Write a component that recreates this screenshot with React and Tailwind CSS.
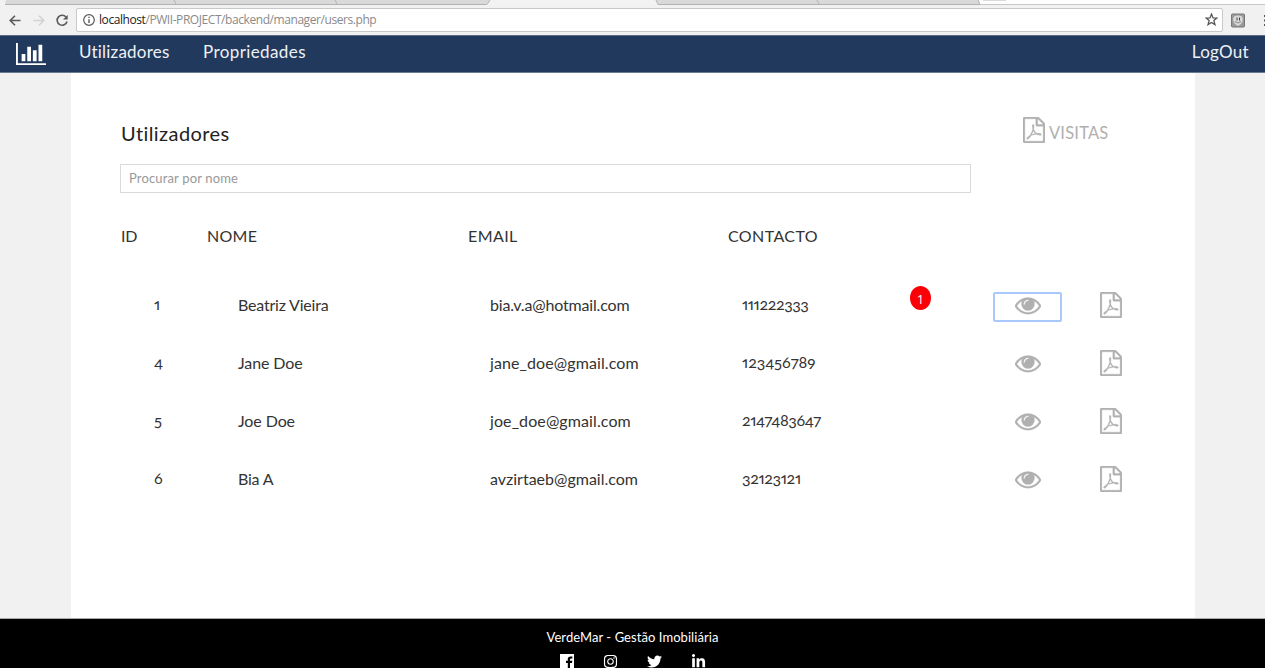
import React from "react";
import { FaTwitter, FaInstagram, FaLinkedinIn } from "react-icons/fa";

const users = [
  { id: 1, name: "Beatriz Vieira", email: "bia.v.a@hotmail.com", phone: "111222333", nameCls: "tracking-[-0.2px]", mailCls: "tracking-[-0.17px]", phoneCls: "tracking-[-0.4px]", active: true },
  { id: 4, name: "Jane Doe", email: "jane_doe@gmail.com", phone: "123456789", nameCls: "tracking-[-0.1px]", mailCls: "tracking-[0.1px]", phoneCls: "tracking-[-0.05px]" },
  { id: 5, name: "Joe Doe", email: "joe_doe@gmail.com", phone: "2147483647", nameCls: "tracking-[-0.1px]", mailCls: "tracking-[0.1px]", phoneCls: "tracking-[-0.42px]" },
  { id: 6, name: "Bia A", email: "avzirtaeb@gmail.com", phone: "32123121", nameCls: "tracking-[-0.2px]", mailCls: "tracking-[0px]", phoneCls: "tracking-[-0.35px]" },
];

function PdfIcon() {
  return (
    <svg viewBox="0 0 1536 1792" className="block h-[26px] w-[22px] shrink-0 fill-[#b0b0b0] stroke-[#b0b0b0]" strokeWidth="24" preserveAspectRatio="none">
      <path d="M1468 380q28 28 48 76t20 88v1152q0 40-28 68t-68 28h-1344q-40 0-68-28t-28-68v-1600q0-40 28-68t68-28h896q40 0 88 20t76 48zM1024 136v376h376q-10-29-22-41l-313-313q-12-12-41-22zM1408 1664v-1024h-416q-40 0-68-28t-28-68v-416h-768v1536h1280zM894 1071q33 26 84 56 59-7 117-7 147 0 177 49 16 22 2 52 0 1-1 2l-2 2v1q-6 38-71 38-48 0-115-20t-130-53q-221 24-392 83-153 262-242 262-15 0-28-7l-24-12q-1-1-6-5-10-10-6-36 9-40 56-91.5t132-96.5q14-9 23 6 2 2 2 4 52-85 107-197 68-136 104-262-24-82-30.5-159.5t6.5-127.5q11-40 42-40h22q23 0 35 15 18 21 9 68-2 6-4 8 1 3 1 8v30q-2 123-14 192 55 164 146 238zM318 1482q52-24 137-158-51 40-87.5 84t-49.5 74zM716 562q-15 42-2 132 1-7 7-44 0-3 7-43 1-4 4-8-1-1-1-2-1-2-1-3-1-22-13-36 0 1-1 2v2zM592 1223q135-54 284-81-2-1-13-9.5t-16-13.5q-76-67-127-176-27 86-83 197-30 56-45 83zM1238 1207q-24-24-140-24 76 28 124 28 14 0 18-1 0-1-2-3z" />
    </svg>
  );
}

function EyeIcon() {
  return (
    <svg viewBox="0 0 1792 1792" className="block size-[26px] fill-[#b0b0b0] stroke-[#b0b0b0]" strokeWidth="20">
      <path d="M1664 960q-152-236-381-353 61 104 61 225 0 185-131.5 316.5t-316.5 131.5-316.5-131.5-131.5-316.5q0-121 61-225-229 117-381 353 133 205 333.5 326.5t434.5 121.5 434.5-121.5 333.5-326.5zM944 576q0-20-14-34t-34-14q-125 0-214.5 89.5t-89.5 214.5q0 20 14 34t34 14 34-14 14-34q0-86 61-147t147-61q20 0 34-14t14-34zM1792 960q0 34-20 69-140 230-376.5 368.5t-499.5 138.5-499.5-139-376.5-368q-20-35-20-69t20-69q140-229 376.5-368t499.5-139 499.5 139 376.5 368q20 35 20 69z" />
    </svg>
  );
}

function BrowserChrome() {
  return (
    <div className="h-[35px] shrink-0 bg-[#f1f1f1]">
      <svg viewBox="0 0 1265 5" className="block h-[5px] w-full">
        <rect width="1265" height="5" fill="#fdfdfd" />
        <path d="M0 0H7L5 4.5H0Z" fill="#f1f1f1" />
        <path d="M6 0H490L487 4H5ZM656 0H978L980 4H658Z" fill="#d9d9d9" />
        <path d="M490 0H656L658 5H487Z" fill="#f2f2f2" />
        <path d="M5 4.5H487L490 0M656 0L658 4.5H980L978 0M174 0L176 4M335 0L337 4M817 0L819 4" fill="none" stroke="#b2b2b2" />
        <rect x="983" width="23" height="1" fill="#d9d9d9" />
        <path d="M980 4.5H1265" stroke="#c6c6c6" />
      </svg>
      <div className="flex h-[30px] items-center pb-px">
        <svg viewBox="0 0 76 30" className="h-[30px] w-[76px] shrink-0" fill="none" stroke="#5a5a5a" strokeWidth="1.6">
          <path d="M20.500 15.500H10.500M15 10.700L10.200 15.500L15 20.300" />
          <path d="M33.500 15.500H43.500M39 10.700L43.800 15.500L39 20.300" stroke="#d2d2d2" />
          <path d="M66.300 12.400A5 5 0 1 0 67 16.500" />
          <path d="M67.700 10V14.500H63Z" fill="#5a5a5a" stroke="none" />
        </svg>
        <div className="flex h-[24px] w-[1147px] shrink-0 items-center rounded-[2px] border border-[#c9c9c9] bg-white pl-[5px] pr-[4px]">
          <svg viewBox="0 0 14 14" className="mr-[3px] size-[14px]" fill="none" stroke="#5a5a5a" strokeWidth="1.2">
            <circle cx="7" cy="7" r="5.300" />
            <path d="M7 6.200V10M7 3.800V5.100" strokeWidth="1.400" />
          </svg>
          <span className="whitespace-nowrap font-['Open_Sans','Noto_Sans',sans-serif] text-[12px] leading-4 tracking-[-0.43px] text-[#8a8a8a]">
            <span className="text-[#222]">localhost</span>/PWII-PROJECT/backend/manager/users.php
          </span>
          <svg viewBox="0 0 12 12" className="ml-auto size-[13px]" fill="none" stroke="#555" strokeWidth="1.2">
            <path d="M6 1L7.400 4.500L11 4.700L8.200 7L9.200 10.700L6 8.700L2.800 10.700L3.800 7L1 4.700L4.600 4.500Z" />
          </svg>
        </div>
        <svg viewBox="0 0 42 30" className="h-[30px] w-[42px] shrink-0">
          <rect x="8.500" y="9" width="13" height="13" rx="1" fill="#9a9a9a" stroke="#777" />
          <path d="M11 11.500Q15 9.500 19 11.500Q21 15 18 19L15 21L12 19Q9 15 11 11.500Z" fill="#d9d9d9" />
          <path d="M14 12.500V15.500M16.500 12.500V15.500" stroke="#444" fill="none" />
          <path d="M12 16.500Q15 19.500 18 16.500" stroke="#888" fill="none" />
          <path d="M41 10H42V12H41ZM41 14.500H42V16.500H41ZM41 19H42V21H41Z" fill="#555" />
        </svg>
      </div>
    </div>
  );
}

export default function App() {
  return (
    <div className="flex h-[668px] w-[1265px] flex-col overflow-hidden bg-[#f1f1f1] font-['Lato',sans-serif] text-[#333]">
      <BrowserChrome />
      <nav className="flex h-[38px] shrink-0 items-center border-y border-t-[#5c6b84] border-b-[#687b96] bg-[#22395e] px-4 text-[17px] leading-6 text-[#eef1f5]">
        <svg viewBox="0 128 2048 1536" className="-mt-[1px] h-[22px] w-[30px] fill-white" preserveAspectRatio="none">
          <path d="M640 896v512h-256v-512h256zM1024 384v1024h-256v-1024h256zM2048 1536v128h-2048v-1536h128v1408h1920zM1408 640v768h-256v-768h256zM1792 256v1152h-256v-1152h256z" />
        </svg>
        <a className="ml-[33px] w-[124px] pb-1 tracking-[0.2px]">Utilizadores</a>
        <a className="pb-1 tracking-[0.4px]">Propriedades</a>
        <a className="ml-auto pb-1 tracking-[0.3px]">LogOut</a>
      </nav>
      <main className="ml-[71px] h-[545px] w-[1124px] shrink-0 bg-white pl-[50px]">
        <div className="flex h-[91px] items-end">
          <h1 className="w-[902px] pb-[17px] text-[20px] leading-7 tracking-[0.42px] text-[#222]">Utilizadores</h1>
          <a className="flex items-end gap-1 pb-[21px] text-[16.5px] text-[#b0b0b0]">
            <PdfIcon />
            <span className="leading-5 tracking-[0.2px]">VISITAS</span>
          </a>
        </div>
        <input
          type="text"
          placeholder="Procurar por nome"
          className="-ml-px block h-[29px] w-[851px] border border-[#d9d9d9] px-2 pb-[2px] text-[13px] tracking-[0.15px] outline-none placeholder:text-[#999]"
        />
        <div className="flex h-[84px] items-center pb-0 pt-0.5 text-[16px] leading-6">
          <div className="w-[86px] tracking-[-0.3px]">ID</div>
          <div className="w-[261px] tracking-[0.25px]">NOME</div>
          <div className="w-[260px] tracking-[0.4px]">EMAIL</div>
          <div className="tracking-[0.4px]">CONTACTO</div>
        </div>
        <div>
          {users.map((u) => (
            <div key={u.id} className="flex h-[58px] items-center text-[16px] leading-6">
              <div className="w-[117px] pb-1 pl-[33px] proportional-nums oldstyle-nums">{u.id}</div>
              <div className={`w-[252px] pb-0.5 ${u.nameCls}`}>{u.name}</div>
              <div className={`w-[252px] pb-0.5 ${u.mailCls}`}>{u.email}</div>
              <div className={`w-[168px] pb-1 proportional-nums oldstyle-nums ${u.phoneCls}`}>{u.phone}</div>
              <div className="w-[83px]">
                {u.active && (
                  <span className="mb-[17px] flex h-[24px] w-[21px] items-center justify-center rounded-[50%] bg-[#fb0007] pt-[3px] font-['Open_Sans',sans-serif] text-[13px] text-white">1</span>
                )}
              </div>
              <button className={`mt-px flex h-[30px] w-[69px] items-center justify-center rounded-[2px] border-2 pb-[4px] ${u.active ? "border-[#a9c9fc]" : "border-transparent"}`}>
                <EyeIcon />
              </button>
              <div className="pb-0.5 pl-[38px]"><PdfIcon /></div>
            </div>
          ))}
        </div>
      </main>
      <footer className="flex h-[50px] shrink-0 flex-col items-center border-t border-[#aaa] bg-black text-white">
        <p className="mt-[9px] text-[13px] leading-[18px] tracking-[0.06px]">VerdeMar - Gestão Imobiliária</p>
        <div className="mt-[8px] flex w-[146px] shrink-0 justify-between">
          <svg viewBox="0 0 14 14" className="size-[14px] fill-white">
            <path d="M0 0H14V14H10V9H12L12.300 6.800H10V5.500Q10 4.500 11 4.500H12.400V2.500H10.600Q7.800 2.500 7.800 5.200V6.800H6V9H7.800V14H0Z" />
          </svg>
          <FaInstagram className="size-[15px]" />
          <FaTwitter className="size-[15px]" />
          <FaLinkedinIn className="size-[15px]" />
        </div>
      </footer>
    </div>
  );
}
